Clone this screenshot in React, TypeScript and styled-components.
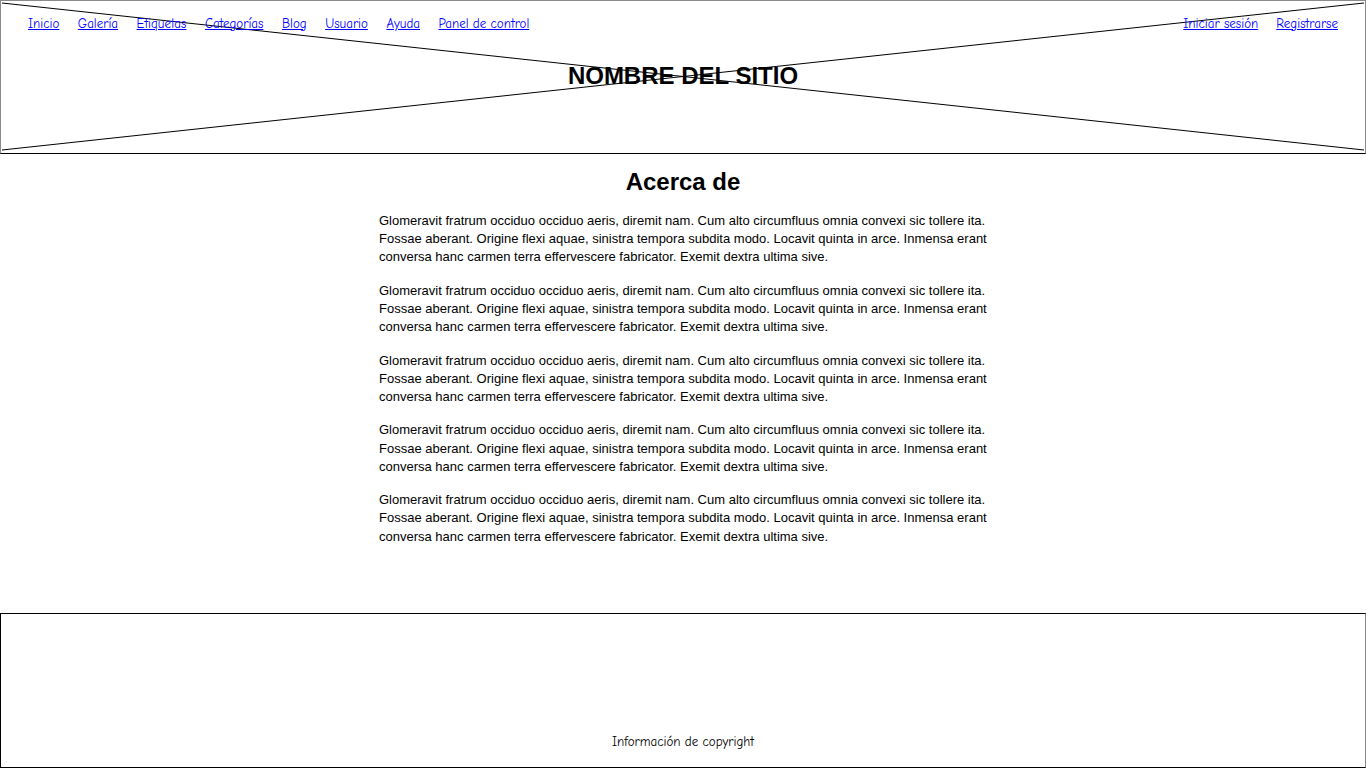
import React from "react";
import styled, { createGlobalStyle } from "styled-components";

const GlobalStyle = createGlobalStyle`
  html, body { margin: 0; padding: 0; background: #fff; }
  body { font-family: "Liberation Sans", Arial, sans-serif; color: #000; }
  * { box-sizing: border-box; }
`;

const Page = styled.div`
  display: flex;
  flex-direction: column;
  height: 768px;
  width: 1366px;
`;

const Header = styled.header`
  position: relative;
  height: 154px;
  border-top: 1px solid #8a8a8a;
  border-left: 1px solid #8a8a8a;
  border-right: 1px solid #8a8a8a;
  border-bottom: 1px solid #000;
  display: flex;
  flex-direction: column;
`;

const Cross = styled.svg`
  position: absolute;
  inset: -1px;
  width: 1366px;
  height: 154px;
  pointer-events: none;
`;

const NavBar = styled.nav`
  position: relative;
  display: flex;
  justify-content: space-between;
  align-items: center;
  padding: 13px 27px 0 27px;
  height: 31px;
`;

const NavGroup = styled.div<{ $gap: number }>`
  display: flex;
  gap: ${(p) => p.$gap}px;
`;

const NavLink = styled.a`
  font-family: "Comic Sans MS", "Comic Neue", "Liberation Sans", sans-serif;
  font-size: 13px;
  color: #0000ff;
  text-decoration: underline;
  cursor: pointer;
`;

const SiteName = styled.h1`
  position: relative;
  margin: 0;
  margin-top: 30px;
  text-align: center;
  font-family: "Liberation Sans", Arial, sans-serif;
  font-weight: bold;
  font-size: 24px;
  line-height: 28px;
  letter-spacing: 0;
`;

const Main = styled.main`
  flex: 1;
  display: flex;
  flex-direction: column;
  align-items: center;
  padding-top: 14px;
`;

const Title = styled.h2`
  margin: 0 0 16px;
  font-size: 24px;
  line-height: 28px;
  font-weight: bold;
`;

const Content = styled.div`
  width: 608px;
`;

const Para = styled.p`
  margin: 0 0 15.2px;
  font-size: 13px;
  line-height: 18.2px;
`;

const Footer = styled.footer`
  height: 155px;
  border: 1px solid #000;
  border-right-color: #8a8a8a;
  display: flex;
  flex-direction: column;
  justify-content: flex-end;
  align-items: center;
  padding-bottom: 17px;
`;

const Copyright = styled.span`
  font-family: "Comic Sans MS", "Comic Neue", "Liberation Sans", sans-serif;
  font-size: 13px;
  line-height: 16px;
`;

const leftLinks = ["Inicio", "Galería", "Etiquetas", "Categorías", "Blog", "Usuario", "Ayuda", "Panel de control"];
const rightLinks = ["Iniciar sesión", "Registrarse"];

const text =
  "Glomeravit fratrum occiduo occiduo aeris, diremit nam. Cum alto circumfluus omnia convexi sic tollere ita. Fossae aberant. Origine flexi aquae, sinistra tempora subdita modo. Locavit quinta in arce. Inmensa erant conversa hanc carmen terra effervescere fabricator. Exemit dextra ultima sive.";

export default function App() {
  return (
    <>
      <GlobalStyle />
      <Page>
        <Header>
          <Cross viewBox="0 0 1366 154" preserveAspectRatio="none">
            <line x1="2" y1="3" x2="1364" y2="150" stroke="#000" strokeWidth="1" />
            <line x1="2" y1="150" x2="1364" y2="3" stroke="#000" strokeWidth="1" />
          </Cross>
          <NavBar>
            <NavGroup $gap={18.5}>
              {leftLinks.map((l) => (
                <NavLink key={l}>{l}</NavLink>
              ))}
            </NavGroup>
            <NavGroup $gap={18}>
              {rightLinks.map((l) => (
                <NavLink key={l}>{l}</NavLink>
              ))}
            </NavGroup>
          </NavBar>
          <SiteName>NOMBRE DEL SITIO</SiteName>
        </Header>
        <Main>
          <Title>Acerca de</Title>
          <Content>
            {[0, 1, 2, 3, 4].map((i) => (
              <Para key={i}>{text}</Para>
            ))}
          </Content>
        </Main>
        <Footer>
          <Copyright>Información de copyright</Copyright>
        </Footer>
      </Page>
    </>
  );
}
